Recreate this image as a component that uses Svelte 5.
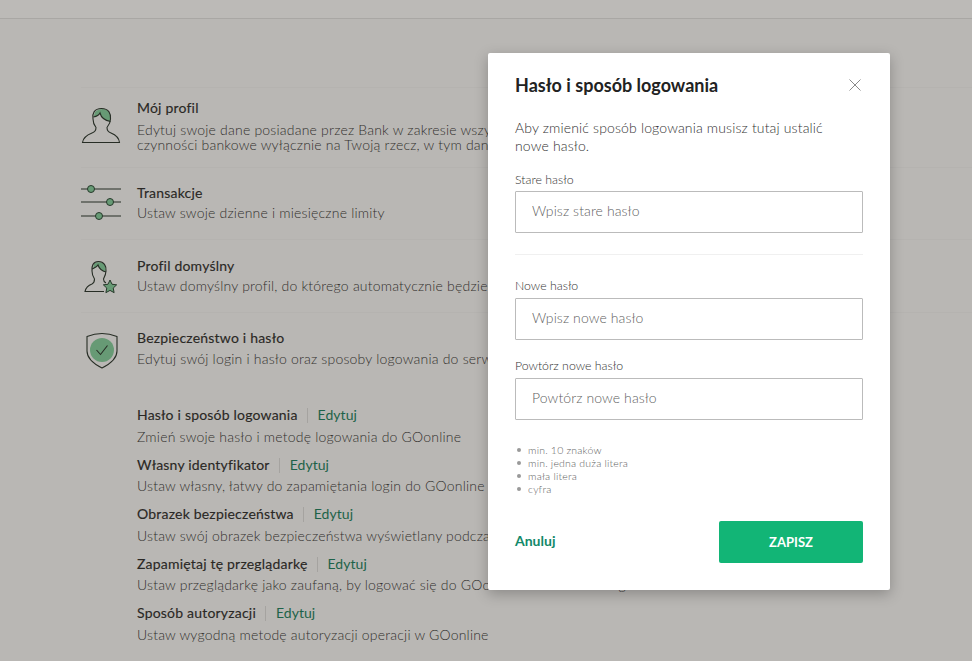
<script>
	const items = [
		{ title: 'Hasło i sposób logowania', desc: 'Zmień swoje hasło i metodę logowania do GOonline' },
		{ title: 'Własny identyfikator', desc: 'Ustaw własny, łatwy do zapamiętania login do GOonline' },
		{ title: 'Obrazek bezpieczeństwa', desc: 'Ustaw swój obrazek bezpieczeństwa wyświetlany podczas logowania' },
		{ title: 'Zapamiętaj tę przeglądarkę', desc: 'Ustaw przeglądarkę jako zaufaną, by logować się do GOonline bez dodatkowego' },
		{ title: 'Sposób autoryzacji', desc: 'Ustaw wygodną metodę autoryzacji operacji w GOonline' },
	];
	const rules = ['min. 10 znaków', 'min. jedna duża litera', 'mała litera', 'cyfra'];
</script>

<div class="page">
	<header class="top"></header>

	<main class="list">
		<section class="row first">
			<div class="slot">
				<svg width="40" height="37" viewBox="0 0 40 37">
					<path class="leaf" d="M14 5C18 1 26 1 28.500 6C29.500 9 29.500 12 29 14.500C24 13.500 20 10 19 6.500C18 8 15 9.500 12.500 10Z" />
					<path class="line" d="M1.500 35.500C2 31 6 28 11 26C14 25 15 23 15 20.500C13 18 12 15 12 12C11 7 13 1.500 20.500 1.500C28 1.500 30 7 29.500 12C29.500 15 28 18 26 20.500C26 23 27 25 30 26C35 28 38 31 38.500 35.500Z" />
					<path class="line" d="M12.500 10C15 9.500 18 8 19 6C20 10 24 13.500 29.500 14.500" />
				</svg>
			</div>
			<div class="copy">
				<h3>Mój profil</h3>
				<p class="tight">Edytuj swoje dane posiadane przez Bank w zakresie wszystkich<br />czynności bankowe wyłącznie na Twoją rzecz, w tym dane</p>
			</div>
		</section>

		<section class="row second">
			<div class="slot">
				<svg width="40" height="36" viewBox="0 0 40 36">
					<path class="line" d="M0 4H40M0 17H40M0 31H40" />
					<circle class="knob" cx="10" cy="4" r="3.500" />
					<circle class="knob" cx="29" cy="17" r="3.500" />
					<circle class="knob" cx="18" cy="31" r="3.500" />
				</svg>
			</div>
			<div class="copy">
				<h3>Transakcje</h3>
				<p>Ustaw swoje dzienne i miesięczne limity</p>
			</div>
		</section>

		<section class="row third">
			<div class="slot">
				<svg width="36" height="34" viewBox="0 0 36 34">
					<path class="leaf" d="M10 4C13 1 19 2 21 5C22 8 22 10 21 12C18 11 15 8 14 6C13 7 11 8 9 9Z" />
					<path class="line" d="M20 31.500H1C2 27 5 25 8 24C10 23 10.500 21 10.500 19C8.500 16 8 14 8 11C7.500 6 9 1.500 14.500 1.500C20 1.500 22.500 6 22 11C22 14 21 16 19.500 19C19.500 21 20 22 22 23" />
					<path class="line" d="M8 9C10 8 13 7 14 5C15 8 18 11 22 12" />
					<path class="star" d="M26 20L28 24.250L32.660 24.840L29.230 28.050L30.110 32.660L26 30.400L21.890 32.660L22.770 28.050L19.340 24.840L24 24.250Z" />
				</svg>
			</div>
			<div class="copy">
				<h3>Profil domyślny</h3>
				<p>Ustaw domyślny profil, do którego automatycznie będziesz logowany</p>
			</div>
		</section>

		<section class="row fourth">
			<div class="slot">
				<svg width="32" height="37" viewBox="0 0 32 37">
					<path class="line" d="M1 4.500C6 2.500 11 1.500 16 1.500C21 1.500 26 2.500 31 4.500V19C31 27 24 32 16 36C8 32 1 27 1 19Z" />
					<circle class="disc" cx="16" cy="18" r="12" />
					<path class="line" d="M10.500 18L14.500 22.500L21.500 13.500" />
				</svg>
			</div>
			<div class="copy">
				<h3>Bezpieczeństwo i hasło</h3>
				<p>Edytuj swój login i hasło oraz sposoby logowania do serwisu GOonline</p>
			</div>
		</section>

		<div class="subs">
			{#each items as item}
				<div class="sub">
					<h3>{item.title}<span class="sep"></span><span class="edit">Edytuj</span></h3>
					<p>{item.desc}</p>
				</div>
			{/each}
		</div>
	</main>

	<div class="overlay"></div>

	<div class="modal">
		<div class="modal-head">
			<h2>Hasło i sposób logowania</h2>
			<svg width="12" height="12" viewBox="0 0 12 12"><path d="M.5.5l11 11M11.500.5l-11 11" /></svg>
		</div>
		<p class="intro">Aby zmienić sposób logowania musisz tutaj ustalić nowe hasło.</p>

		<label class="field old">
			<span>Stare hasło</span>
			<input type="password" placeholder="Wpisz stare hasło" />
		</label>
		<div class="divider"></div>
		<label class="field">
			<span>Nowe hasło</span>
			<input type="password" placeholder="Wpisz nowe hasło" />
		</label>
		<label class="field repeat">
			<span>Powtórz nowe hasło</span>
			<input type="password" placeholder="Powtórz nowe hasło" />
		</label>

		<ul class="rules">
			{#each rules as rule}
				<li>{rule}</li>
			{/each}
		</ul>

		<div class="actions">
			<span class="cancel">Anuluj</span>
			<button type="button">ZAPISZ</button>
		</div>
	</div>
</div>

<style>
:global(body) {
	background: #fff;
	overflow: hidden;
}

.page {
	position: relative;
	height: 661px;
	overflow: hidden;
	background: #fbfbfb;
	font-family: Lato, "Open Sans", sans-serif;
	font-size: 14px;
	color: #2e2e2e;
}

.top {
	height: 18px;
	border-bottom: 1px solid #e2e2e2;
	background: #fff;
}

.list {
	width: 891px;
	margin: 68px 0 0 81px;
	overflow: hidden;
}

.row {
	display: flex;
	box-sizing: border-box;
	border-top: 1px solid #f4f4f4;
	white-space: nowrap;
}

.first {
	height: 80px;
	padding-top: 11px;
}

.second {
	height: 72px;
	padding-top: 16px;
}

.third {
	height: 73px;
	padding-top: 17px;
}

.fourth {
	height: 57px;
	padding-top: 16px;
}

.slot {
	flex: none;
	width: 56px;
}

.first svg {
	margin-top: 8px;
}

.second svg {
	margin-top: 1px;
}

.third svg {
	margin: 3px 0 0 3px;
}

.fourth svg {
	margin: 3px 0 0 5px;
}

h3 {
	margin: 0 0 2px;
	font-size: 14px;
	line-height: 18px;
	font-weight: 400;
	color: #222;
	letter-spacing: .2px;
	-webkit-text-stroke: .15px #222;
}

.first h3 {
	margin-bottom: 5px;
}

.fourth h3 {
	margin-bottom: 3px;
}

p {
	margin: 0;
	line-height: 18px;
	font-weight: 300;
	letter-spacing: .2px;
}

p.tight {
	line-height: 15px;
}

.line {
	fill: none;
	stroke: #1d2a22;
	stroke-width: 1.100;
}

.leaf,
.star,
.knob,
.disc {
	fill: #7fcf9b;
}

.knob,
.star {
	stroke: #1d3a2a;
	stroke-width: 1;
}

.subs {
	margin: 37px 0 0 56px;
	white-space: nowrap;
}

.sub {
	height: 49.500px;
}

.sub h3 {
	margin-bottom: 3.600px;
}

.sep {
	display: inline-block;
	width: 1px;
	height: 15px;
	margin: 0 10px 0 9px;
	vertical-align: -3px;
	background: #ddd;
}

.edit {
	color: #0f7a58;
	-webkit-text-stroke: 0;
	letter-spacing: .05px;
}

.overlay {
	position: absolute;
	inset: 0;
	background: rgba(58, 52, 43, .34);
}

.modal {
	position: absolute;
	left: 488px;
	top: 53px;
	width: 348px;
	height: 537px;
	padding: 0 27px;
	background: #fff;
	box-shadow: 0 4px 14px rgba(0, 0, 0, .25);
	border-radius: 2px;
	color: #333;
	font-weight: 300;
}

.modal-head {
	display: flex;
	align-items: center;
	justify-content: space-between;
	height: 24px;
	padding-top: 20px;
}

h2 {
	margin: 0;
	font-size: 18px;
	font-weight: 700;
	color: #222;
}

.modal-head svg {
	margin-right: 2px;
	stroke: #8a8a8a;
}

.intro {
	width: 325px;
	margin-top: 22px;
	line-height: 18px;
	letter-spacing: .15px;
}

.field {
	display: block;
}

.field span {
	display: block;
	font-size: 12.300px;
	line-height: 16px;
	margin-bottom: 4px;
}

.old {
	margin-top: 17px;
}

.old span {
	margin-bottom: 3px;
}

input {
	display: block;
	box-sizing: border-box;
	width: 348px;
	height: 42px;
	padding: 0 16px 4px;
	border: 1px solid #bbb;
	border-radius: 1px;
	outline: none;
	font: inherit;
	letter-spacing: .1px;
}

input::placeholder {
	color: #5f5f5f;
	opacity: 1;
}

.divider {
	height: 1px;
	margin-top: 21px;
	background: #f0f0f0;
}

.divider + .field {
	margin-top: 23px;
}

.repeat {
	margin-top: 18px;
}

.rules {
	margin: 24px 0 0;
	padding: 0;
	list-style: none;
	font-size: 10.500px;
	line-height: 13px;
	color: #5f5f5f;
	letter-spacing: .2px;
}

.rules li::before {
	content: '';
	display: inline-block;
	width: 4px;
	height: 4px;
	margin: 0 7px 2px 2px;
	border-radius: 50%;
	background: #999;
	vertical-align: middle;
}

.actions {
	display: flex;
	align-items: center;
	justify-content: space-between;
	margin-top: 25px;
}

.cancel {
	padding-bottom: 4px;
	font-weight: 700;
	color: #12896a;
}

button {
	width: 144px;
	height: 42px;
	border: 0;
	border-radius: 2px;
	background: #12b576;
	color: #fff;
	font: 700 13px Lato, sans-serif;
}
</style>
